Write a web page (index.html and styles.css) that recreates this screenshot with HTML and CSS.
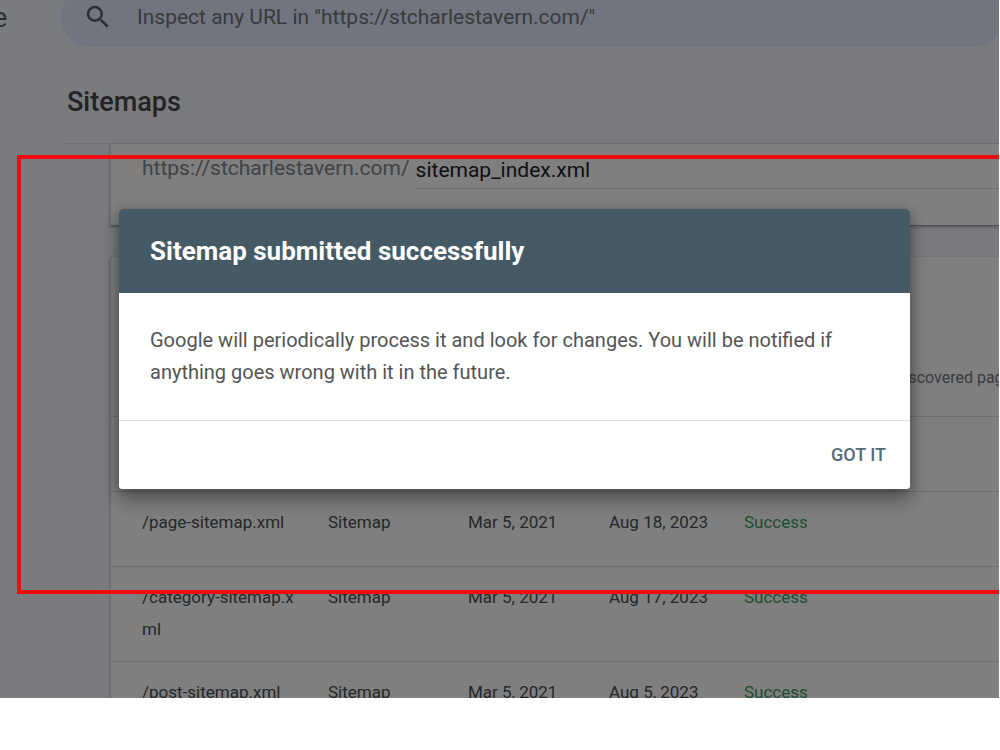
FILE: index.html
```html
<!DOCTYPE html>
<html lang="en">
<head>
<meta charset="utf-8">
<title>Sitemaps</title>
<link rel="stylesheet" href="styles.css">
</head>
<body>
<div class="screen">
  <div class="app">
    <aside class="rail"><span class="brand">e</span></aside>
    <div class="content">
      <div class="search">
        <svg class="search-icon" viewBox="0 0 24 24" aria-hidden="true"><path d="M15.5 14h-.79l-.28-.27A6.47 6.47 0 0 0 16 9.5 6.5 6.5 0 1 0 9.5 16c1.61 0 3.09-.59 4.23-1.57l.27.28v.79l5 4.99L20.49 19l-4.99-5zm-6 0a4.5 4.5 0 1 1 0-9 4.5 4.5 0 0 1 0 9z"/></svg>
        <input class="search-input" type="text" aria-label="Inspect any URL" placeholder='Inspect any URL in "https://stcharlestavern.com/"'>
      </div>
      <h1 class="title">Sitemaps</h1>
      <main class="panels">
        <form class="card add-card">
          <label class="prefix" for="sitemap-url">https://stcharlestavern.com/</label>
          <input class="url-input" id="sitemap-url" type="text" value="sitemap_index.xml">
        </form>
        <section class="card list-card">
          <table class="sitemaps">
            <colgroup><col class="c-name"><col class="c-type"><col class="c-sent"><col class="c-read"><col class="c-status"><col></colgroup>
            <thead>
              <tr><th></th><th></th><th></th><th></th><th></th><th>Discovered pages</th></tr>
            </thead>
            <tbody>
              <tr><td>&nbsp;</td><td></td><td></td><td></td><td></td><td></td></tr>
              <tr><td>/page-sitemap.xml</td><td>Sitemap</td><td>Mar 5, 2021</td><td>Aug 18, 2023</td><td class="ok">Success</td><td></td></tr>
              <tr><td>/category-sitemap.xml</td><td>Sitemap</td><td>Mar 5, 2021</td><td>Aug 17, 2023</td><td class="ok">Success</td><td></td></tr>
              <tr><td>/post-sitemap.xml</td><td>Sitemap</td><td>Mar 5, 2021</td><td>Aug 5, 2023</td><td class="ok">Success</td><td></td></tr>
            </tbody>
          </table>
        </section>
      </main>
    </div>
  </div>
  <div class="scrim">
    <div class="dialog" role="dialog" aria-labelledby="dialog-title">
      <h2 class="dialog-title" id="dialog-title">Sitemap submitted successfully</h2>
      <p class="dialog-body">Google will periodically process it and look for changes. You will be notified if anything goes wrong with it in the future.</p>
      <div class="dialog-actions"><button class="confirm" type="button">GOT IT</button></div>
    </div>
  </div>
  <div class="highlight"></div>
</div>
</body>
</html>
```
FILE: styles.css
```css
* { box-sizing: border-box; }

body {
  margin: 0;
  height: 100vh;
  padding: 0 1px 52px 0;
  display: flex;
  flex-direction: column;
  background: #fff;
  font-family: Roboto, "Liberation Sans", sans-serif;
}

.screen {
  position: relative;
  flex: 1;
  min-height: 0;
  overflow: hidden;
  background: #f4f6fc;
}

.app { display: flex; }

.rail {
  flex: 0 0 61px;
  overflow: hidden;
}

.brand {
  display: block;
  margin-left: -7px;
  font-size: 27px;
  line-height: 36px;
  color: #5f6368;
}

.content {
  flex: 1;
  min-width: 0;
}

.search {
  display: flex;
  align-items: center;
  gap: 24px;
  height: 60px;
  margin: -13px -4px 0 0;
  padding: 0 22px;
  border-radius: 30px;
  background: #e0eafe;
}

.search-icon {
  flex: none;
  width: 30px;
  height: 30px;
  fill: #5a5d62;
}

.search-input {
  flex: 1;
  border: 0;
  padding: 0;
  background: none;
  font: 21px/24px Roboto, sans-serif;
  color: #5f6368;
}

.search-input::placeholder { color: #72757a; }

.title {
  margin: 0;
  padding: 38px 6px 24px;
  border-bottom: 1px solid #e3e5ea;
  font-size: 27px;
  line-height: 34px;
  font-weight: 500;
  color: #46474a;
}

.panels {
  padding-left: 49px;
  margin-right: -32px;
}

.card {
  background: #fff;
  border: solid #dcdde2;
  border-width: 0 0 0 1px;
  box-shadow: 0 1px 3px rgba(0, 0, 0, .3);
}

.add-card {
  display: flex;
  align-items: flex-start;
  gap: 6px;
  padding: 8px 0 36px 31px;
  border-bottom: 1px solid #a8a8ac;
}

.prefix {
  padding-top: 4px;
  font-size: 21px;
  line-height: 24px;
  color: #80858a;
}

.url-input {
  flex: 1;
  height: 37px;
  border: 0;
  border-bottom: 1px solid #dadce0;
  padding: 0;
  background: none;
  font: 21px/24px Roboto, sans-serif;
  color: #202124;
}

.list-card {
  margin-top: 31px;
  border-radius: 4px 0 0;
}

.sitemaps {
  width: 100%;
  border-collapse: collapse;
  table-layout: fixed;
}

.c-name { width: 217px; }
.c-type { width: 140px; }
.c-sent { width: 141px; }
.c-read { width: 135px; }
.c-status { width: 150px; }

.sitemaps th {
  height: 159px;
  padding: 0 0 22px;
  vertical-align: bottom;
  text-align: left;
  font-size: 16px;
  line-height: 32px;
  font-weight: 400;
  color: #75797e;
}

.sitemaps tr { border-bottom: 1px solid #dcdde0; }

.sitemaps td {
  height: 75px;
  padding: 14px 0 16px;
  vertical-align: top;
  font-size: 17px;
  line-height: 32px;
  color: #4c5053;
}

.sitemaps td:first-child {
  padding-left: 31px;
  padding-right: 24px;
  word-break: break-all;
}

.sitemaps td.ok { color: #3f9b62; }

.scrim {
  position: absolute;
  inset: 0;
  display: flex;
  align-items: center;
  padding: 0 89px 0 119px;
  background: rgba(0, 0, 0, .5);
}

.dialog {
  flex: 1;
  border-radius: 3px;
  overflow: hidden;
  background: #fff;
  box-shadow: 0 12px 20px rgba(0, 0, 0, .3), 0 2px 12px rgba(0, 0, 0, .25);
}

.dialog-title {
  margin: 0;
  padding: 26px 31px;
  background: #455a64;
  font-size: 26px;
  line-height: 32px;
  font-weight: 700;
  color: #fff;
}

.dialog-body {
  margin: 0;
  padding: 31px 31px 32px;
  border-bottom: 1px solid #e0e0e0;
  font-size: 20px;
  line-height: 32px;
  color: #555;
}

.dialog-actions {
  display: flex;
  justify-content: flex-end;
  padding: 12px 16px;
}

.confirm {
  border: 0;
  padding: 0 8px;
  background: none;
  font: 500 18px/44px Roboto, sans-serif;
  color: #546a75;
}

.highlight {
  position: absolute;
  top: 155px;
  right: -8px;
  bottom: 104px;
  left: 17px;
  border: 4px solid #f00c0c;
  pointer-events: none;
}
```
